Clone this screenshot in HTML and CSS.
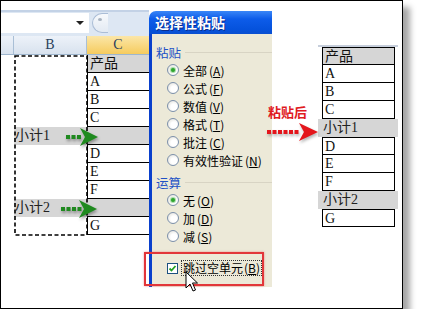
FILE: index.html
```html
<!DOCTYPE html>
<html lang="zh">
<head>
  <meta charset="UTF-8" />
  <title>选择性粘贴 - 跳过空单元</title>
  <link rel="stylesheet" href="styles.css">
</head>
<body>
  <div class="frame">
    <!-- Excel sheet with the copied range -->
    <div class="sheet">
      <div class="sheet-gap"></div>
      <div class="formula-bar">
        <div class="name-box"></div>
        <div class="fx-btn"><span></span></div>
      </div>
      <div class="col-heads">
        <div></div>
        <div>B</div>
        <div class="sel">C</div>
      </div>
      <div class="srow hdr"><div></div><div class="b"></div><div class="c">产品</div></div>
      <div class="srow"><div></div><div class="b"></div><div class="c">A</div></div>
      <div class="srow"><div></div><div class="b"></div><div class="c">B</div></div>
      <div class="srow"><div></div><div class="b"></div><div class="c">C</div></div>
      <div class="srow sub"><div></div><div class="b">小计1</div><div class="c"></div></div>
      <div class="srow"><div></div><div class="b"></div><div class="c">D</div></div>
      <div class="srow"><div></div><div class="b"></div><div class="c">E</div></div>
      <div class="srow"><div></div><div class="b"></div><div class="c">F</div></div>
      <div class="srow sub"><div></div><div class="b">小计2</div><div class="c"></div></div>
      <div class="srow"><div></div><div class="b"></div><div class="c">G</div></div>

      <svg class="marquee" width="76" height="182" viewBox="0 0 76 182">
        <rect x="1" y="1" width="72" height="179" fill="none" stroke="#000" stroke-width="1.6" stroke-dasharray="4 2.5"/>
      </svg>
      <svg class="green-arrow ga1" width="36" height="20" viewBox="0 0 36 20">
        <rect x="2" y="8" width="4" height="4"/>
        <rect x="7.5" y="8" width="4" height="4"/>
        <rect x="13" y="8" width="4" height="4"/>
        <polygon points="16,1 34,10 16,19 21,10"/>
      </svg>
      <svg class="green-arrow ga2" width="40" height="20" viewBox="0 0 40 20">
        <rect x="2" y="8" width="4" height="4"/>
        <rect x="7.5" y="8" width="4" height="4"/>
        <rect x="13" y="8" width="4" height="4"/>
        <rect x="18.5" y="8" width="4" height="4"/>
        <polygon points="20,1 38,10 20,19 25,10"/>
      </svg>
    </div>

    <!-- Paste special dialog -->
    <div class="dialog-col">
      <div class="dialog">
        <div class="dlg-title">选择性粘贴</div>
        <div class="dlg-body">
          <div class="grp">粘贴</div>
          <div class="opt"><span class="radio on"></span>全部<span class="key">(<u>A</u>)</span></div>
          <div class="opt"><span class="radio"></span>公式<span class="key">(<u>F</u>)</span></div>
          <div class="opt"><span class="radio"></span>数值<span class="key">(<u>V</u>)</span></div>
          <div class="opt"><span class="radio"></span>格式<span class="key">(<u>T</u>)</span></div>
          <div class="opt"><span class="radio"></span>批注<span class="key">(<u>C</u>)</span></div>
          <div class="opt"><span class="radio"></span>有效性验证<span class="key">(<u>N</u>)</span></div>
          <div class="grp grp-2">运算</div>
          <div class="opt"><span class="radio on"></span>无<span class="key">(<u>O</u>)</span></div>
          <div class="opt"><span class="radio"></span>加<span class="key">(<u>D</u>)</span></div>
          <div class="opt"><span class="radio"></span>减<span class="key">(<u>S</u>)</span></div>
          <div class="opt opt-check">
            <span class="check">
              <svg width="9" height="9" viewBox="0 0 9 9"><path d="M1.5 4.5 L3.5 6.5 L7.5 2" fill="none" stroke="#21a121" stroke-width="1.8"/></svg>
            </span>
            <span class="focus">跳过空单元<span class="key">(<u>B</u>)</span></span>
          </div>
        </div>
      </div>
    </div>

    <!-- Result after pasting -->
    <div class="result">
      <div class="ptable">
        <div class="prow top gray">产品</div>
        <div class="prow">A</div>
        <div class="prow">B</div>
        <div class="prow">C</div>
        <div class="psub">小计1</div>
        <div class="prow top">D</div>
        <div class="prow">E</div>
        <div class="prow">F</div>
        <div class="psub">小计2</div>
        <div class="prow top">G</div>
      </div>
    </div>

    <!-- overlays -->
    <div class="highlight"></div>
    <svg class="cursor" width="14" height="22" viewBox="0 0 14 22">
      <path d="M1 1 L1 17 L5 13 L8 20 L10.5 19 L7.5 12 L12.5 12 Z" fill="#fff" stroke="#000" stroke-width="1"/>
    </svg>
    <div class="red-label">粘贴后</div>
    <svg class="red-arrow" width="56" height="22" viewBox="0 0 56 22">
      <rect x="2" y="9" width="4" height="4"/>
      <rect x="7.5" y="9" width="4" height="4"/>
      <rect x="13" y="9" width="4" height="4"/>
      <rect x="18.5" y="9" width="4" height="4"/>
      <rect x="24" y="9" width="4" height="4"/>
      <rect x="29.5" y="9" width="4" height="4"/>
      <polygon points="34,2 53,11 34,20 39,11"/>
    </svg>
  </div>
</body>
</html>
```

FILE: styles.css
```css
* {
  box-sizing: border-box;
}
body {
  margin: 0;
  background: #fff;
  font-family: "Noto Sans CJK SC", sans-serif;
}
.frame {
  position: relative;
  width: 403px;
  height: 309px;
  border: 1px solid #000;
  background: #fff;
  display: flex;
  box-shadow: 7px 7px 6px rgba(0,0,0,0.35);
}

/* sheet */
.sheet {
  width: 148px;
  position: relative;
  display: flex;
  flex-direction: column;
}
.sheet-gap {
  height: 9px;
}
.formula-bar {
  height: 26px;
  background: #dde7f3;
  border-top: 2px solid #c3d2e6;
  display: flex;
  align-items: center;
  gap: 3px;
  padding-bottom: 2px;
}
.name-box {
  position: relative;
  width: 88px;
  height: 20px;
  background: #fff;
}
.name-box::after {
  content: '';
  position: absolute;
  right: 5px;
  top: 8px;
  border-left: 4px solid transparent;
  border-right: 4px solid transparent;
  border-top: 4px solid #222;
}
.fx-btn {
  width: 16px;
  height: 20px;
  border: 1px solid #aabdd6;
  border-right: none;
  border-radius: 10px 0 0 10px;
  background: linear-gradient(#f7f9fc, #e3eaf3);
  padding: 4px 0 0 5px;
}
.fx-btn span {
  display: block;
  width: 4px;
  height: 3px;
  border-radius: 50%;
  background: #a8b3c0;
}
.col-heads {
  height: 19px;
  display: grid;
  grid-template-columns: 13px 73px 62px;
  background: linear-gradient(#edf2f9, #d8e2ee);
  border-bottom: 1px solid #9eb6ce;
}
.col-heads > div {
  border-right: 1px solid #a9bfd6;
  text-align: center;
  font: 14px/18px "Liberation Serif", serif;
  color: #2a3f5c;
}
.col-heads .sel {
  border-right: none;
  background: linear-gradient(#fbe6a8, #f6cb5e);
}
.srow {
  height: 18px;
  display: grid;
  grid-template-columns: 13px 73px 62px;
  font: 14px/17px "Liberation Serif", "Noto Sans CJK SC", serif;
  color: #111;
}
.srow .c {
  border-left: 1px solid #000;
  border-bottom: 1px solid #000;
  padding-left: 2px;
}
.srow.hdr .c {
  background: #d6d6d6;
}
.srow.sub .b,
.srow.sub .c {
  background: #d6d6d6;
}
.srow.sub .b {
  padding-left: 1px;
  color: #222;
}
.srow.sub .c {
  border-left: none;
}
.marquee {
  position: absolute;
  left: 13px;
  top: 54px;
}
.green-arrow {
  position: absolute;
  fill: #1f8a1f;
  filter: drop-shadow(1px 2px 1.5px rgba(0,0,0,0.35));
}
.ga1 {
  left: 63px;
  top: 126px;
}
.ga2 {
  left: 58px;
  top: 198px;
}

/* dialog */
.dialog-col {
  width: 123px;
  padding-top: 10px;
}
.dialog {
  height: 276px;
  display: flex;
  flex-direction: column;
}
.dlg-title {
  height: 23px;
  background: linear-gradient(#3a86f7, #0d5ce9 35%, #0552dc 80%, #0a4fd0);
  border-radius: 7px 0 0 0;
  color: #fff;
  font: bold 14px/23px "Noto Sans CJK SC", sans-serif;
  padding-left: 6px;
  text-shadow: 1px 1px 0 #0b2d8c;
}
.dlg-body {
  flex: 1;
  background: #ece9d8;
  border-left: 3px solid #0a40cc;
  padding: 9px 0 0 4px;
}
.grp {
  height: 18px;
  display: flex;
  align-items: center;
  gap: 4px;
  font-size: 12.5px;
  color: #2151c6;
}
.grp::after {
  content: '';
  flex: 1;
  height: 1px;
  background: #d8d4c4;
}
.grp-2 {
  margin-top: 4px;
}
.opt {
  height: 18px;
  display: flex;
  align-items: center;
  padding-left: 11px;
  font-size: 12px;
  color: #000;
}
.key {
  margin-left: 2px;
}
.radio {
  position: relative;
  width: 12px;
  height: 12px;
  border-radius: 50%;
  border: 1px solid #7c90aa;
  background: radial-gradient(circle at 60% 60%, #fff 35%, #dcdad2);
  margin-right: 4px;
}
.radio.on::after {
  content: '';
  position: absolute;
  left: 3px;
  top: 3px;
  width: 4px;
  height: 4px;
  border-radius: 50%;
  background: #2ea52e;
  box-shadow: 0 0 1px 1px #9fd89f;
}
.opt-check {
  margin-top: 14px;
}
.check {
  width: 11px;
  height: 11px;
  border: 1px solid #1c5180;
  background: #fff;
  margin-right: 4px;
  display: flex;
  align-items: center;
  justify-content: center;
}
.focus {
  outline: 1px dotted #333;
  padding: 0 1px;
  line-height: 14px;
}
.focus .key {
  margin-left: 1px;
}

/* result */
.result {
  flex: 1;
  padding: 44px 0 0 46px;
}
.ptable {
  width: 80px;
  border-top: 2px solid #c6cedb;
  font: 14px/17px "Liberation Serif", "Noto Sans CJK SC", serif;
  color: #111;
}
.prow {
  height: 18px;
  margin: 0 3px 0 4px;
  border: 1px solid #000;
  border-top: none;
  padding-left: 2px;
}
.prow.top {
  border-top: 1px solid #000;
}
.prow.gray {
  background: #d6d6d6;
}
.psub {
  height: 18px;
  background: #d6d6d6;
  padding-left: 5px;
  color: #222;
}

/* overlays */
.highlight {
  position: absolute;
  left: 143px;
  top: 251px;
  width: 120px;
  height: 34px;
  border: 2px solid #e2363a;
  box-shadow: 0 0 2px rgba(226,54,58,0.5);
}
.cursor {
  position: absolute;
  left: 184px;
  top: 270px;
}
.red-label {
  position: absolute;
  left: 267px;
  top: 103px;
  font: bold 13px/16px "Noto Sans CJK SC", sans-serif;
  color: #e01b1f;
}
.red-arrow {
  position: absolute;
  left: 264px;
  top: 120px;
  fill: #e4161c;
  filter: drop-shadow(1px 2px 1.5px rgba(0,0,0,0.3));
}
```
